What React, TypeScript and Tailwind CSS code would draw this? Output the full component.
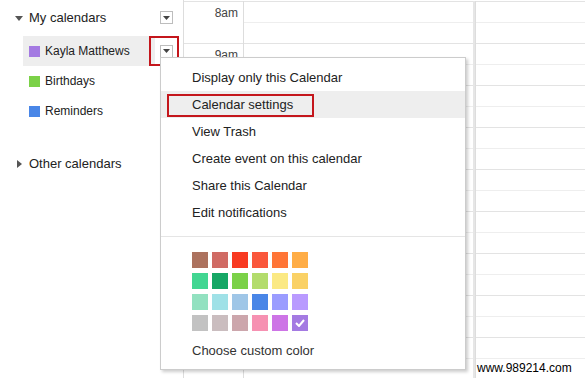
import React from "react";

const palette = [
  ["#ac725e", "#d06b64", "#f83a22", "#fa573c", "#ff7537", "#ffad46"],
  ["#42d692", "#16a765", "#7bd148", "#b3dc6c", "#fbe983", "#fad165"],
  ["#92e1c0", "#9fe1e7", "#9fc6e7", "#4986e7", "#9a9cff", "#b99aff"],
  ["#c2c2c2", "#cabdbf", "#cca6ac", "#f691b2", "#cd74e6", "#a47ae2"],
];

const menuItems = [
  "Display only this Calendar",
  "Calendar settings",
  "View Trash",
  "Create event on this calendar",
  "Share this Calendar",
  "Edit notifications",
];

const DropButton = () => (
  <div className="w-[13px] h-[13px] border border-[#bdbdbd] bg-white flex items-center justify-center">
    <svg width="7" height="4" viewBox="0 0 7 4">
      <path d="M0 0 L7 0 L3.5 4 Z" fill="#444" />
    </svg>
  </div>
);

const CalendarRow = ({ color, name, active }: { color: string; name: string; active?: boolean }) => (
  <div className="flex items-center h-[30px] text-[12px]">
    <div
      className={`ml-[23px] w-[132px] h-full flex items-center pl-[6px] ${active ? "bg-[#eeeeee]" : ""}`}
    >
      <div className="w-[11px] h-[11px]" style={{ backgroundColor: color }} />
      <span className="ml-[5px]">{name}</span>
    </div>
  </div>
);

const Sidebar = () => (
  <div className="w-[183px] shrink-0 relative text-[13px] text-[#222]">
    <div className="flex items-center h-[22px] mt-[7px]">
      <svg className="ml-[15px]" width="8" height="5" viewBox="0 0 8 5">
        <path d="M0 0 L8 0 L4 5 Z" fill="#555" />
      </svg>
      <span className="ml-[6px]">My calendars</span>
    </div>
    <div className="mt-[7px]">
      <CalendarRow color="#a47ae2" name="Kayla Matthews" active />
      <CalendarRow color="#7bd148" name="Birthdays" />
      <CalendarRow color="#4986e7" name="Reminders" />
    </div>
    <div className="flex items-center h-[22px] mt-[27px]">
      <svg className="ml-[17px]" width="5" height="8" viewBox="0 0 5 8">
        <path d="M0 0 L5 4 L0 8 Z" fill="#555" />
      </svg>
      <span className="ml-[7px]">Other calendars</span>
    </div>
    <div className="absolute left-[160px] top-[11px]">
      <DropButton />
    </div>
    <div className="absolute left-[149px] top-[36px] w-[30px] h-[30px] border-2 border-[#c4161c] flex items-center justify-center pl-[4px]">
      <DropButton />
    </div>
  </div>
);

const Grid = () => (
  <div className="flex-1 flex border-l border-[#dddddd] pt-[1px]">
    <div className="w-[60px] shrink-0 border-r border-[#dddddd]">
      {Array.from({ length: 9 }).map((_, i) => (
        <div key={i} className="h-[42px] border-t border-[#e3e3e3] text-right pr-[5px] pt-[2px] text-[12px] text-[#444]">
          {i === 0 ? "8am" : i === 1 ? "9am" : ""}
        </div>
      ))}
    </div>
    <div className="w-[231px] shrink-0 border-r-2 border-[#e6e6e6]">
      {Array.from({ length: 18 }).map((_, i) => (
        <div key={i} className={`h-[21px] border-t ${i % 2 === 0 ? "border-[#e3e3e3]" : "border-[#eeeeee]"}`} />
      ))}
    </div>
    <div className="flex-1 border-l border-[#dddddd]">
      {Array.from({ length: 18 }).map((_, i) => (
        <div key={i} className={`h-[21px] border-t ${i % 2 === 0 ? "border-[#e3e3e3]" : "border-[#eeeeee]"}`} />
      ))}
    </div>
  </div>
);

const Menu = () => (
  <div className="absolute left-[160px] top-[57px] w-[306px] h-[313px] bg-white border border-[#cccccc] shadow-[2px_2px_3px_rgba(0,0,0,0.2)] text-[13px] text-[#222] pt-[6px]">
    {menuItems.map((item, i) => (
      <div key={item} className={`h-[27px] flex items-center pl-[31px] ${i === 1 ? "bg-[#eeeeee]" : ""}`}>
        {item}
      </div>
    ))}
    <div className="mt-[10px] border-t border-[#e5e5e5]" />
    <div className="mt-[15px] ml-[31px] flex flex-col gap-[5px]">
      {palette.map((row, r) => (
        <div key={r} className="flex gap-[4px]">
          {row.map((c, k) => (
            <div key={c} className="w-[16px] h-[16px] flex items-center justify-center" style={{ backgroundColor: c }}>
              {r === 3 && k === 5 && (
                <svg width="10" height="8" viewBox="0 0 10 8">
                  <path d="M1 4 L4 7 L9 1" stroke="white" strokeWidth="2" fill="none" />
                </svg>
              )}
            </div>
          ))}
        </div>
      ))}
    </div>
    <div className="mt-[10px] ml-[31px] text-[#333]">Choose custom color</div>
    <div className="absolute left-[6px] top-[36px] w-[147px] h-[23px] border-2 border-[#c4161c]" />
  </div>
);

export default function App() {
  return (
    <div className="relative w-[585px] h-[378px] overflow-hidden bg-white flex font-['Liberation_Sans',Arial,sans-serif]">
      <Sidebar />
      <Grid />
      <Menu />
      <div className="absolute left-[477px] top-[361px] bg-white text-[12px] leading-[14px] text-black pr-[10px]">
        www.989214.com
      </div>
    </div>
  );
}
